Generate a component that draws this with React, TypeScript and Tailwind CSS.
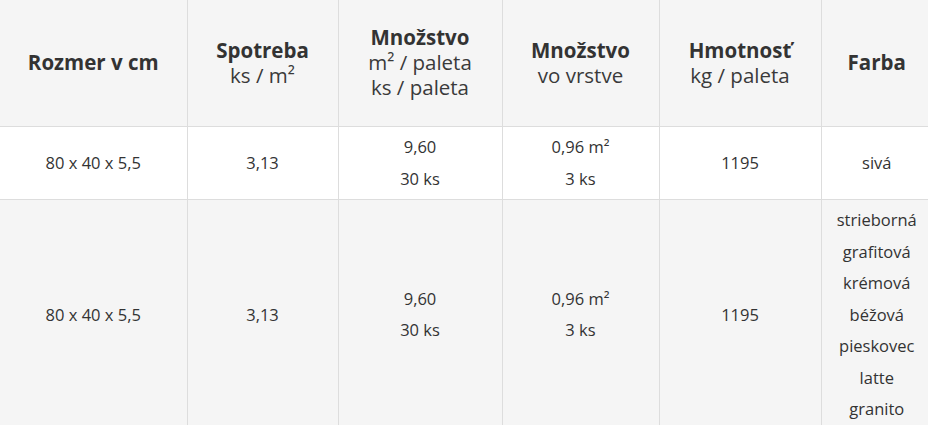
const cols = ["w-[187px]", "w-[151px]", "w-[164px]", "w-[157px]", "w-[162px]", "w-[111px]"];

type Row = { cells: string[][]; bg: string };

const rows: Row[] = [
  {
    bg: "bg-white",
    cells: [["80 x 40 x 5,5"], ["3,13"], ["9,60", "30 ks"], ["0,96 m²", "3 ks"], ["1195"], ["sivá"]],
  },
  {
    bg: "bg-[#f5f5f5]",
    cells: [
      ["80 x 40 x 5,5"],
      ["3,13"],
      ["9,60", "30 ks"],
      ["0,96 m²", "3 ks"],
      ["1195"],
      ["strieborná", "grafitová", "krémová", "béžová", "pieskovec", "latte", "granito"],
    ],
  },
];

const headers: { title: string; sub: string[] }[] = [
  { title: "Rozmer v cm", sub: [] },
  { title: "Spotreba", sub: ["ks / m²"] },
  { title: "Množstvo", sub: ["m² / paleta", "ks / paleta"] },
  { title: "Množstvo", sub: ["vo vrstve"] },
  { title: "Hmotnosť", sub: ["kg / paleta"] },
  { title: "Farba", sub: [] },
];

export default function App() {
  return (
    <div className="w-[928px] h-[425px] overflow-hidden bg-white font-['Open_Sans',sans-serif] text-[#333]">
      <table className="w-[932px] table-fixed border-collapse">
        <thead>
          <tr className="bg-[#f5f5f5] h-[126px]">
            {headers.map((h, i) => (
              <th
                key={i}
                className={`${cols[i]} border-b border-[#ddd] ${i > 0 ? "border-l" : ""} text-center align-middle px-1 text-[20.5px] leading-[25px]`}
              >
                <div className="font-bold">{h.title}</div>
                {h.sub.map((s) => (
                  <div key={s} className="font-normal text-[#3a3a3a]">
                    {s}
                  </div>
                ))}
              </th>
            ))}
          </tr>
        </thead>
        <tbody>
          {rows.map((r, ri) => (
            <tr key={ri} className={r.bg}>
              {r.cells.map((c, i) => (
                <td
                  key={i}
                  className={`border-b border-[#ddd] ${i > 0 ? "border-l" : ""} text-center align-middle py-[4.5px] px-1 text-[16.5px] leading-[31.5px]`}
                >
                  {c.map((line) => (
                    <div key={line}>{line}</div>
                  ))}
                </td>
              ))}
            </tr>
          ))}
        </tbody>
      </table>
    </div>
  );
}
